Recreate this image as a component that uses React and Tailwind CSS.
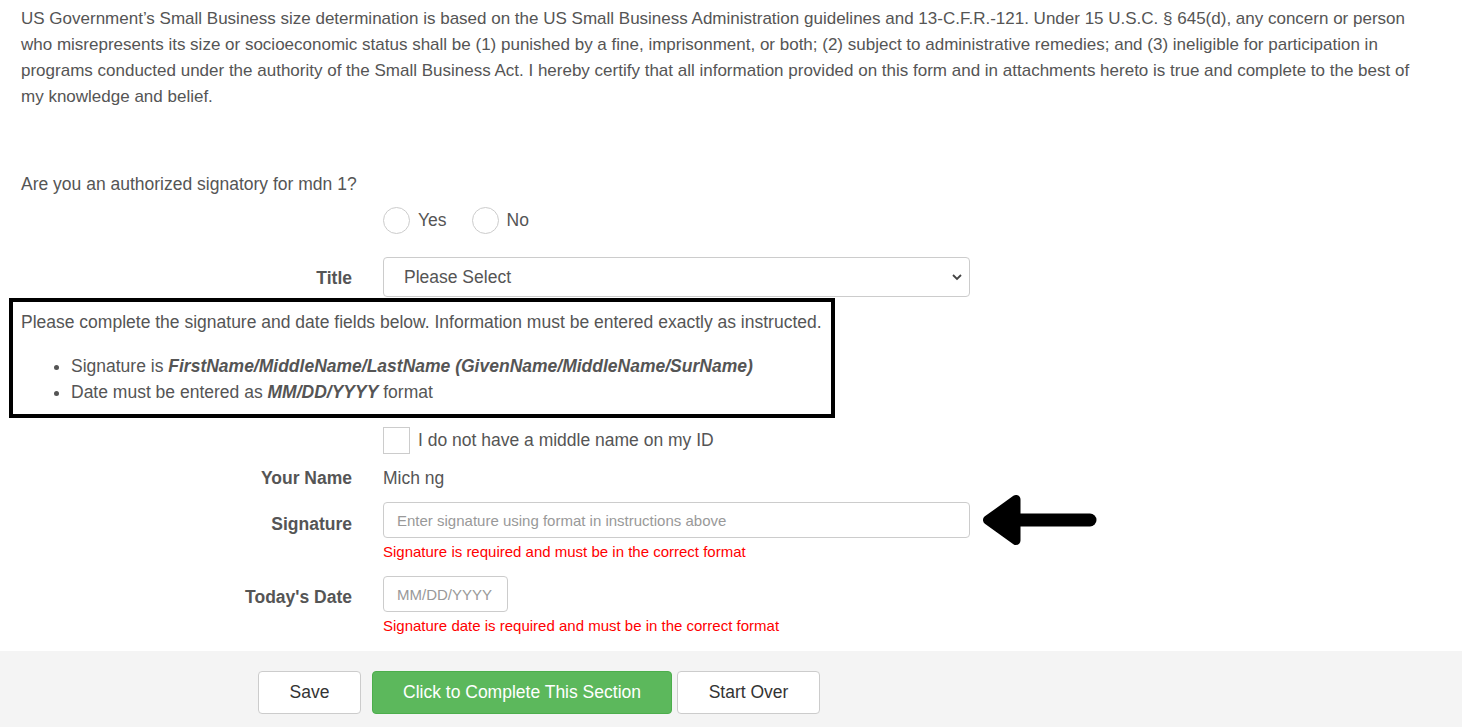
import { useState } from 'react';

function Row({ label, labelCls = '', children, className = '' }) {
  return (
    <div className={`flex items-start ${className}`}>
      <div className={`w-[383px] shrink-0 pr-[31px] text-right font-bold ${labelCls}`}>{label}</div>
      <div className="flex-1">{children}</div>
    </div>
  );
}

function Arrow() {
  return (
    <svg width="124" height="54" viewBox="0 0 124 54" className="-my-[9px] ml-[7px] shrink-0">
      <path d="M38 27 H113" stroke="#000" strokeWidth="13" strokeLinecap="round" />
      <path
        d="M39 6.5 L39 47.5 L10.5 27 Z"
        fill="#000"
        stroke="#000"
        strokeWidth="9"
        strokeLinejoin="round"
      />
    </svg>
  );
}

export default function App() {
  const [answer, setAnswer] = useState('');
  const [noMiddle, setNoMiddle] = useState(false);

  return (
    <div className="min-h-[727px] bg-white text-[17.5px] text-[#555] font-['Liberation_Sans',Arial,sans-serif]">
      <div className="pl-[21px] pr-[8px] pt-[6px]">
        <p className="text-[17px] leading-[26px] whitespace-nowrap">
          US Government’s Small Business size determination is based on the US Small Business Administration
          guidelines and 13-C.F.R.-121. Under 15 U.S.C. § 645(d), any concern or person
          <br />
          who misrepresents its size or socioeconomic status shall be (1) punished by a fine, imprisonment, or both;
          (2) subject to administrative remedies; and (3) ineligible for participation in
          <br />
          programs conducted under the authority of the Small Business Act. I hereby certify that all information
          provided on this form and in attachments hereto is true and complete to the best of
          <br />
          my knowledge and belief.
        </p>
        <p className="mt-[62px] leading-[24px]">Are you an authorized signatory for mdn 1?</p>
      </div>

      <div className="mt-[11px] flex items-center pl-[383px]">
        {['Yes', 'No'].map((opt) => (
          <label key={opt} className="mr-[25px] flex cursor-pointer items-center gap-[8px]">
            <span
              onClick={() => setAnswer(opt)}
              className="flex h-[27px] w-[27px] items-center justify-center rounded-full border border-[#ccc] bg-white"
            >
              {answer === opt && <span className="h-[13px] w-[13px] rounded-full bg-[#555]" />}
            </span>
            <span className="leading-[27px]">{opt}</span>
          </label>
        ))}
      </div>

      <Row label="Title" labelCls="leading-[40px] pt-[1px]" className="mt-[23px] h-[40px]">
        <div className="relative w-[587px]">
          <select className="h-[40px] w-full appearance-none rounded-[4px] border border-[#ccc] bg-white pl-[20px] text-[17.5px] text-[#555] outline-none">
            <option>Please Select</option>
          </select>
          <svg
            className="pointer-events-none absolute right-[7px] top-[15px]"
            width="12"
            height="10"
            viewBox="0 0 12 10"
          >
            <path d="M2 3 L6 7 L10 3" stroke="#444" strokeWidth="1.8" fill="none" />
          </svg>
        </div>
      </Row>

      <div className="ml-[9px] mt-[1px] w-[826px] border-[4px] border-black px-[8px] pt-[8px] pb-[9px]">
        <p className="leading-[24px]">
          Please complete the signature and date fields below. Information must be entered exactly as instructed.
        </p>
        <ul className="mt-[19px] list-disc pl-[50px] leading-[26px]">
          <li>
            Signature is <b><i>FirstName/MiddleName/LastName (GivenName/MiddleName/SurName)</i></b>
          </li>
          <li>
            Date must be entered as <b><i>MM/DD/YYYY</i></b> format
          </li>
        </ul>
      </div>

      <div className="mt-[9px] flex items-center gap-[8px] pl-[383px]">
        <span
          onClick={() => setNoMiddle(!noMiddle)}
          className="flex h-[27px] w-[27px] items-center justify-center border border-[#ccc] bg-white text-[14px]"
        >
          {noMiddle ? '✓' : ''}
        </span>
        <span className="leading-[27px]">I do not have a middle name on my ID</span>
      </div>

      <Row label="Your Name" labelCls="leading-[24px]" className="mt-[12px] leading-[24px]">
        Mich ng
      </Row>

      <Row label="Signature" labelCls="leading-[44px]" className="mt-[12px]">
        <div className="flex items-center">
          <input
            className="h-[36px] w-[587px] rounded-[4px] border border-[#ccc] px-[13px] text-[15px] text-[#555] outline-none placeholder:text-[#999]"
            placeholder="Enter signature using format in instructions above"
          />
          <Arrow />
        </div>
        <div className="mt-[4px] text-[15px] leading-[20px] text-[#f00]">
          Signature is required and must be in the correct format
        </div>
      </Row>

      <Row label="Today's Date" labelCls="leading-[42px]" className="mt-[14px]">
        <input
          className="h-[36px] w-[125px] rounded-[4px] border border-[#ccc] px-[13px] text-[15px] text-[#555] outline-none placeholder:text-[#999]"
          placeholder="MM/DD/YYYY"
        />
        <div className="mt-[4px] text-[15px] leading-[20px] text-[#f00]">
          Signature date is required and must be in the correct format
        </div>
      </Row>

      <div className="mt-[15px] flex h-[76px] bg-[#f4f4f4] pl-[258px] pt-[20px]">
        <button className="h-[43px] w-[103px] rounded-[4px] border border-[#ccc] bg-white text-[17.5px] text-[#333]">
          Save
        </button>
        <button className="ml-[11px] h-[43px] w-[300px] rounded-[4px] border border-[#4cae4c] bg-[#5cb85c] text-[17.5px] text-white">
          Click to Complete This Section
        </button>
        <button className="ml-[5px] h-[43px] w-[143px] rounded-[4px] border border-[#ccc] bg-white text-[17.5px] text-[#333]">
          Start Over
        </button>
      </div>
    </div>
  );
}
